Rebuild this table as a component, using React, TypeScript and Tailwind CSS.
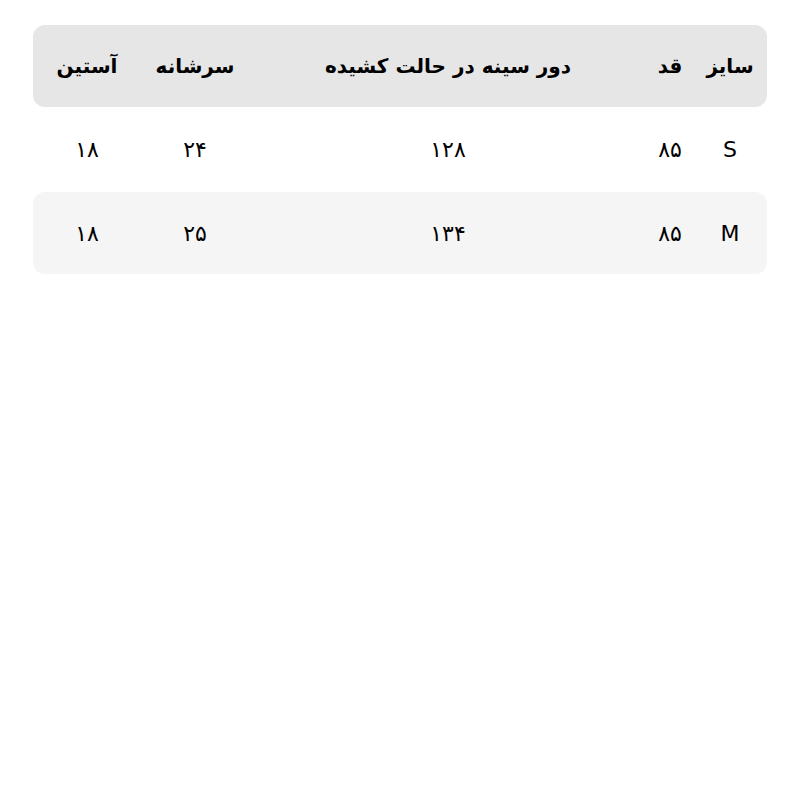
const headers = ['سایز', 'قد', 'دور سینه در حالت کشیده', 'سرشانه', 'آستین']

const rows = [
    ['S', '۸۵', '۱۲۸', '۲۴', '۱۸'],
    ['M', '۸۵', '۱۳۴', '۲۵', '۱۸'],
]

const cols = 'grid grid-cols-[74px_46px_398px_108px_108px] items-center'

export default function App() {
    return (
        <div dir="rtl" className="min-h-screen bg-white px-[33px] pt-[25px] text-black" style={{ fontFamily: '"DejaVu Sans", "Noto Sans", sans-serif' }}>
            <div className={`${cols} h-[82px] rounded-xl bg-[#e6e6e6]`}>
                {headers.map((h) => (
                    <div key={h} className="text-center text-[20px] font-bold whitespace-nowrap">{h}</div>
                ))}
            </div>
            {rows.map((r, i) => (
                <div key={r[0]} className={`${cols} ${i === 0 ? 'h-[85px]' : 'h-[82px] bg-[#f5f5f5]'} rounded-xl`}>
                    {r.map((c, j) => (
                        <div key={j} className="text-center text-[22px]">{c}</div>
                    ))}
                </div>
            ))}
        </div>
    )
}
